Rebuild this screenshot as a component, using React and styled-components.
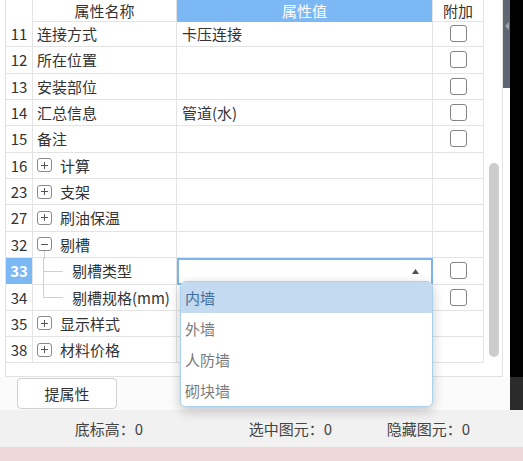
import React from 'react';
import styled, { createGlobalStyle } from 'styled-components';

const GlobalStyle = createGlobalStyle`
  html, body {
    margin: 0;
    padding: 0;
  }
  body {
    width: 523px;
    height: 461px;
    overflow: hidden;
    background: #fff;
    font-family: "Noto Sans CJK SC", "Noto Sans", sans-serif;
  }
`;

const Page = styled.div`
  position: relative;
  width: 523px;
  height: 461px;
  display: flex;
  flex-direction: column;
  color: #333;
  font-size: 15px;
`;

const Main = styled.div`
  display: flex;
  height: 377px;
`;

const Panel = styled.div`
  display: flex;
  box-sizing: border-box;
  margin-left: 5px;
  width: 498px;
  border-right: 1px solid #e2e2e2;
  border-bottom: 1px solid #e2e2e2;
  background: #fff;
`;

const Grid = styled.div`
  display: flex;
  flex-direction: column;
  box-sizing: border-box;
  width: 479px;
  border-left: 1px solid #e2e2e2;
`;

const Row = styled.div`
  display: grid;
  grid-template-columns: 27px 144px 256px 51px;
  height: ${(p) => (p.$header ? '21px' : '26.33px')};
  flex-shrink: 0;
`;

const Cell = styled.div`
  box-sizing: border-box;
  display: flex;
  align-items: center;
  border-right: 1px solid #e3e3e3;
  border-bottom: 1px solid #e3e3e3;
  white-space: nowrap;
  overflow: visible;
`;

const HeadCell = styled(Cell)`
  justify-content: center;
  background: ${(p) => (p.$active ? '#7bb8f4' : '#fff')};
  color: ${(p) => (p.$active ? '#fff' : '#333')};
  border-bottom-color: ${(p) => (p.$active ? '#7bb8f4' : '#e3e3e3')};
`;

const NumCell = styled(Cell)`
  justify-content: center;
  background: ${(p) => (p.$selected ? '#7bb8f4' : '#fff')};
  color: ${(p) => (p.$selected ? '#fff' : '#333')};
  font-weight: ${(p) => (p.$selected ? 700 : 400)};
`;

const NameCell = styled(Cell)`
  padding-left: 4px;
  gap: 8px;
`;

const ChildCell = styled(Cell)`
  padding-left: 0;
  align-items: stretch;
`;

const ChildText = styled.span`
  display: flex;
  align-items: center;
  margin-left: 9px;
`;

const ValueCell = styled(Cell)`
  padding-left: 5px;
`;

const Editor = styled(Cell)`
  border: 2px solid #7db4e9;
  justify-content: flex-end;
  padding-right: 12px;
`;

const ExtraCell = styled(Cell)`
  justify-content: center;
`;

const Check = styled.span`
  box-sizing: border-box;
  width: 17px;
  height: 17px;
  border: 1px solid #858585;
  border-radius: 3px;
  background: #fff;
`;

const Expander = styled.span`
  position: relative;
  box-sizing: border-box;
  width: 15px;
  height: 14px;
  border: 1px solid #8a8a8a;
  border-radius: 3px;
  display: flex;
  align-items: center;
  justify-content: center;
  flex-shrink: 0;
  &::after {
    content: '';
    display: ${(p) => (p.$open ? 'block' : 'none')};
    position: absolute;
    left: 6px;
    top: 13px;
    width: 1px;
    height: 8px;
    background: #cfcfcf;
  }
`;

const Filler = styled.div`
  flex: 1;
`;

const ScrollTrack = styled.div`
  width: 18px;
  display: flex;
  flex-direction: column;
  align-items: center;
  padding-top: 163px;
  padding-left: 2px;
  box-sizing: border-box;
`;

const Thumb = styled.div`
  width: 10px;
  height: 194px;
  border-radius: 5px;
  background: #cdcdcd;
`;

const Splitter = styled.div`
  width: 7px;
  background: #fff;
`;

const Handle = styled.div`
  height: 88px;
  background: #5d6672;
  display: flex;
  justify-content: center;
  padding-top: 22px;
  box-sizing: border-box;
`;

const Dark = styled.div`
  width: 13px;
  background: ${(p) => p.$tone};
`;

const ButtonRow = styled.div`
  display: flex;
  height: 33px;
`;

const ButtonArea = styled.div`
  flex: 1;
  background: #fbfbfb;
  padding: 1px 0 0 17px;
`;

const Button = styled.button`
  box-sizing: border-box;
  width: 100px;
  height: 31px;
  border: 1px solid #cfcfcf;
  border-radius: 4px;
  background: #fff;
  font: inherit;
  font-size: 15px;
  color: #333;
  padding: 0;
`;

const StatusBar = styled.div`
  display: grid;
  grid-template-columns: 143px 189px 138px;
  height: 37px;
  background: #f1f1f1;
  color: #444;
  align-items: center;
`;

const StatusItem = styled.span`
  justify-self: end;
`;

const Pink = styled.div`
  flex: 1;
  background: #f1d8d8;
`;

const Dropdown = styled.div`
  position: absolute;
  left: 180px;
  top: 281px;
  width: 253px;
  box-sizing: border-box;
  border: 1px solid #a9d0ec;
  border-radius: 6px;
  background: #fff;
  overflow: hidden;
  box-shadow: 0 4px 12px rgba(0, 0, 0, 0.22);
`;

const Option = styled.div`
  height: 31px;
  display: flex;
  align-items: center;
  padding-left: 4px;
  background: ${(p) => (p.$active ? '#c4daf0' : '#fff')};
  color: ${(p) => (p.$active ? '#3f6e9f' : '#7a7a7a')};
`;

const rows = [
  { no: 11, name: '连接方式', value: '卡压连接', check: true },
  { no: 12, name: '所在位置', check: true },
  { no: 13, name: '安装部位', check: true },
  { no: 14, name: '汇总信息', value: '管道(水)', check: true },
  { no: 15, name: '备注', check: true },
  { no: 16, name: '计算', group: 'plus' },
  { no: 23, name: '支架', group: 'plus' },
  { no: 27, name: '刷油保温', group: 'plus' },
  { no: 32, name: '剔槽', group: 'minus' },
  { no: 33, name: '剔槽类型', child: 'mid', selected: true, check: true },
  { no: 34, name: '剔槽规格(mm)', child: 'last', check: true },
  { no: 35, name: '显示样式', group: 'plus' },
  { no: 38, name: '材料价格', group: 'plus' },
];

function Sign({ open }) {
  return (
    <svg width="9" height="9" viewBox="0 0 9 9">
      <path d="M1 4.5h7" stroke="#555" strokeWidth="1" />
      {!open && <path d="M4.5 1v7" stroke="#555" strokeWidth="1" />}
    </svg>
  );
}

function TreeLine({ last }) {
  return (
    <svg width="30" height="26" viewBox="0 0 30 26" style={{ flexShrink: 0 }}>
      <path d={last ? 'M10.5 0V13' : 'M10.5 0V26'} stroke="#d0d0d0" strokeWidth="1" />
      <path d="M10.5 13.5H30" stroke="#d0d0d0" strokeWidth="1" />
    </svg>
  );
}

function NameContent({ row }) {
  if (row.child) {
    return (
      <ChildCell>
        <TreeLine last={row.child === 'last'} />
        <ChildText>{row.name}</ChildText>
      </ChildCell>
    );
  }
  return (
    <NameCell>
      {row.group && (
        <Expander $open={row.group === 'minus'}>
          <Sign open={row.group === 'minus'} />
        </Expander>
      )}
      <span>{row.name}</span>
    </NameCell>
  );
}

export default function App() {
  return (
    <Page>
      <GlobalStyle />
      <Main>
        <Panel>
          <Grid>
            <Row $header>
              <HeadCell />
              <HeadCell>属性名称</HeadCell>
              <HeadCell $active>属性值</HeadCell>
              <HeadCell>附加</HeadCell>
            </Row>
            {rows.map((row) => (
              <Row key={row.no}>
                <NumCell $selected={row.selected}>{row.no}</NumCell>
                <NameContent row={row} />
                {row.selected ? (
                  <Editor>
                    <svg width="7" height="5" viewBox="0 0 7 5">
                      <path d="M3.5 0L7 5H0z" fill="#4a5262" />
                    </svg>
                  </Editor>
                ) : (
                  <ValueCell>{row.value}</ValueCell>
                )}
                <ExtraCell>{row.check && <Check />}</ExtraCell>
              </Row>
            ))}
            <Filler />
          </Grid>
          <ScrollTrack>
            <Thumb />
          </ScrollTrack>
        </Panel>
        <Splitter>
          <Handle>
            <svg width="4" height="8" viewBox="0 0 4 8">
              <path d="M4 0V8L0 4z" fill="#9aa2ac" />
            </svg>
          </Handle>
        </Splitter>
        <Dark $tone="#000" />
      </Main>
      <ButtonRow>
        <ButtonArea>
          <Button>提属性</Button>
        </ButtonArea>
        <Dark $tone="#2b2b2b" />
      </ButtonRow>
      <StatusBar>
        <StatusItem>底标高：0</StatusItem>
        <StatusItem>选中图元：0</StatusItem>
        <StatusItem>隐藏图元：0</StatusItem>
      </StatusBar>
      <Pink />
      <Dropdown>
        <Option $active>内墙</Option>
        <Option>外墙</Option>
        <Option>人防墙</Option>
        <Option>砌块墙</Option>
      </Dropdown>
    </Page>
  );
}
